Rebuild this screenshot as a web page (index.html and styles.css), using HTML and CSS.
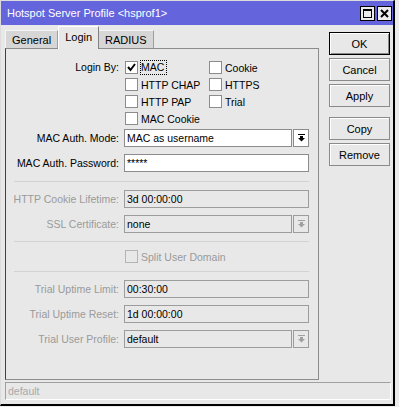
FILE: index.html
```html
<!DOCTYPE html>
<html lang="en">
<head>
    <meta charset="UTF-8">
    <title>Hotspot Server Profile</title>
    <link rel="stylesheet" href="styles.css">
</head>
<body>
    <div class="window">
        <div class="titlebar">
            <span class="title">Hotspot Server Profile &lt;hsprof1&gt;</span>
            <div class="tb-buttons">
                <span class="tb-btn"><span class="max-icon"></span></span>
                <span class="tb-btn">
                    <svg width="9" height="9" viewBox="0 0 9 9"><path d="M1 1 L8 8 M8 1 L1 8" stroke="#000" stroke-width="2"/></svg>
                </span>
            </div>
        </div>

        <div class="content">
            <div class="main">
                <div class="tabs">
                    <span class="tab">General</span>
                    <span class="tab active">Login</span>
                    <span class="tab">RADIUS</span>
                </div>

                <div class="panel">
                    <div class="login-by">
                        <span class="label">Login By:</span>
                        <div class="checks">
                            <span class="check"><span class="box checked"><svg width="11" height="11" viewBox="0 0 11 11"><path d="M2 5 L4.5 8 L9 2" stroke="#000" stroke-width="2" fill="none"/></svg></span><span class="focus">MAC</span></span>
                            <span class="check"><span class="box"></span>Cookie</span>
                            <span class="check"><span class="box"></span>HTTP CHAP</span>
                            <span class="check"><span class="box"></span>HTTPS</span>
                            <span class="check"><span class="box"></span>HTTP PAP</span>
                            <span class="check"><span class="box"></span>Trial</span>
                            <span class="check"><span class="box"></span>MAC Cookie</span>
                        </div>
                    </div>

                    <div class="row first">
                        <span class="label">MAC Auth. Mode:</span>
                        <span class="field select">MAC as username</span>
                        <span class="drop"><svg width="7" height="8" viewBox="0 0 7 8"><rect x="0" y="0" width="7" height="1"/><rect x="2" y="2" width="3" height="2"/><path d="M0 4 H7 L3.5 7.5 Z"/></svg></span>
                    </div>
                    <div class="row">
                        <span class="label">MAC Auth. Password:</span>
                        <span class="field">*****</span>
                    </div>

                    <div class="sep"></div>

                    <div class="row disabled">
                        <span class="label">HTTP Cookie Lifetime:</span>
                        <span class="field">3d 00:00:00</span>
                    </div>
                    <div class="row disabled">
                        <span class="label">SSL Certificate:</span>
                        <span class="field select">none</span>
                        <span class="drop"><svg width="7" height="8" viewBox="0 0 7 8"><rect x="0" y="0" width="7" height="1"/><rect x="2" y="2" width="3" height="2"/><path d="M0 4 H7 L3.5 7.5 Z"/></svg></span>
                    </div>

                    <div class="sep short"></div>

                    <div class="split">
                        <span class="check"><span class="box"></span>Split User Domain</span>
                    </div>

                    <div class="sep short"></div>

                    <div class="row disabled">
                        <span class="label">Trial Uptime Limit:</span>
                        <span class="field">00:30:00</span>
                    </div>
                    <div class="row disabled">
                        <span class="label">Trial Uptime Reset:</span>
                        <span class="field">1d 00:00:00</span>
                    </div>
                    <div class="row disabled">
                        <span class="label">Trial User Profile:</span>
                        <span class="field select">default</span>
                        <span class="drop"><svg width="7" height="8" viewBox="0 0 7 8"><rect x="0" y="0" width="7" height="1"/><rect x="2" y="2" width="3" height="2"/><path d="M0 4 H7 L3.5 7.5 Z"/></svg></span>
                    </div>
                </div>
            </div>

            <div class="actions">
                <button class="btn default">OK</button>
                <button class="btn">Cancel</button>
                <button class="btn">Apply</button>
                <button class="btn spaced">Copy</button>
                <button class="btn">Remove</button>
            </div>
        </div>

        <div class="status">default</div>
    </div>
</body>
</html>
```

FILE: styles.css
```css
* {
    margin: 0;
    padding: 0;
    box-sizing: border-box;
}

body {
    font-family: 'Liberation Sans', Arial, sans-serif;
    font-size: 10.5px;
    color: #000;
    background-color: #ececec;
}

.window {
    width: 395px;
    height: 406px;
    background-color: #e8e8e8;
    border-top: 1px solid #dcdcdc;
    border-left: 1px solid #dcdcdc;
    border-right: 2px solid #000;
    border-bottom: 2px solid #000;
    display: flex;
    flex-direction: column;
}

.titlebar {
    height: 24px;
    background-color: #6464dc;
    color: white;
    display: flex;
    align-items: center;
    justify-content: space-between;
    padding: 0 1px 0 6px;
}

.title {
    font-size: 11px;
}

.tb-buttons {
    display: flex;
    gap: 2px;
}

.tb-btn {
    width: 15px;
    height: 15px;
    background-color: #ececec;
    border: 1px solid #000;
    display: flex;
    align-items: center;
    justify-content: center;
}

.max-icon {
    width: 9px;
    height: 9px;
    border: 1px solid #000;
    border-top-width: 2px;
}

.content {
    flex: 1;
    display: flex;
    padding-left: 4px;
}

.main {
    width: 314px;
    display: flex;
    flex-direction: column;
}

.tabs {
    height: 23px;
    display: flex;
    align-items: flex-end;
    font-size: 11px;
}

.tab {
    height: 18px;
    padding: 0 6px;
    line-height: 18px;
    background-color: #d6d6d6;
    border-top: 1px solid #f4f4f4;
    border-right: 1px solid #a0a0a0;
}

.tab:first-child {
    border-left: 1px solid #f4f4f4;
}

.tab.active {
    height: 23px;
    line-height: 20px;
    background-color: #e8e8e8;
    border-left: 1px solid #fff;
    border-top: 1px solid #fff;
    border-right: 1px solid #808080;
    margin-bottom: -1px;
    position: relative;
}

.panel {
    flex: 1;
    border: 1px solid #8c8c8c;
    border-left-color: #404040;
    padding: 10px 9px 0 0;
}

.label {
    width: 118px;
    padding-right: 5px;
    text-align: right;
    flex-shrink: 0;
}

.login-by {
    display: flex;
}

.login-by .label {
    line-height: 17px;
}

.checks {
    display: grid;
    grid-template-columns: 84px auto;
    grid-auto-rows: 17px;
}

.check {
    display: flex;
    align-items: center;
    gap: 3px;
}

.box {
    width: 13px;
    height: 13px;
    margin-left: 1px;
    background-color: #fff;
    border: 1px solid #8c8c8c;
    display: flex;
    align-items: center;
    justify-content: center;
}

.focus {
    outline: 1px dotted #000;
    padding: 0 2px 0 0;
    line-height: 13px;
}

.row {
    display: flex;
    align-items: center;
    height: 18px;
    margin-top: 7px;
}

.row.first {
    margin-top: 2px;
}

.field {
    flex: 1;
    height: 18px;
    line-height: 16px;
    padding-left: 2px;
    background-color: #fff;
    border: 1px solid #8c8c8c;
}

.drop {
    width: 16px;
    height: 18px;
    margin-left: 1px;
    background-color: #fff;
    border: 1px solid #8c8c8c;
    display: flex;
    align-items: center;
    justify-content: center;
    fill: #000;
}

.disabled .label {
    color: #9a9a9a;
}

.disabled .field,
.disabled .drop {
    background-color: #e8e8e8;
    border-color: #9c9c9c;
}

.disabled .drop {
    fill: #a0a0a0;
}

.sep {
    height: 1px;
    margin: 9px 0 8px 8px;
    background-color: #d2d2d2;
}

.sep.short {
    margin: 8px 0 6px 8px;
}

.split {
    height: 17px;
    padding-left: 118px;
    display: flex;
    align-items: center;
    color: #9a9a9a;
}

.split .box {
    border-color: #b4b4b4;
    background-color: #e8e8e8;
}

.split + .sep.short {
    margin: 6px 0 8px 8px;
}

.actions {
    margin: 7px 0 0 10px;
    display: flex;
    flex-direction: column;
    gap: 3px;
}

.btn {
    width: 61px;
    height: 23px;
    font-family: 'Liberation Sans', Arial, sans-serif;
    font-size: 11px;
    color: #000;
    background-color: #e8e8e8;
    border: 1px solid #8a8a8a;
    box-shadow: inset 1px 1px #fff;
}

.btn.default {
    border-color: #000;
    box-shadow: inset 1px 1px #fff, inset -1px -1px #8a8a8a;
}

.btn.spaced {
    margin-top: 7px;
}

.status {
    height: 18px;
    margin: 2px 2px 4px 4px;
    line-height: 16px;
    padding-left: 2px;
    color: #a8a8a8;
    border: 1px solid #a0a0a0;
    border-right-color: #fff;
    border-bottom-color: #fff;
}
```
